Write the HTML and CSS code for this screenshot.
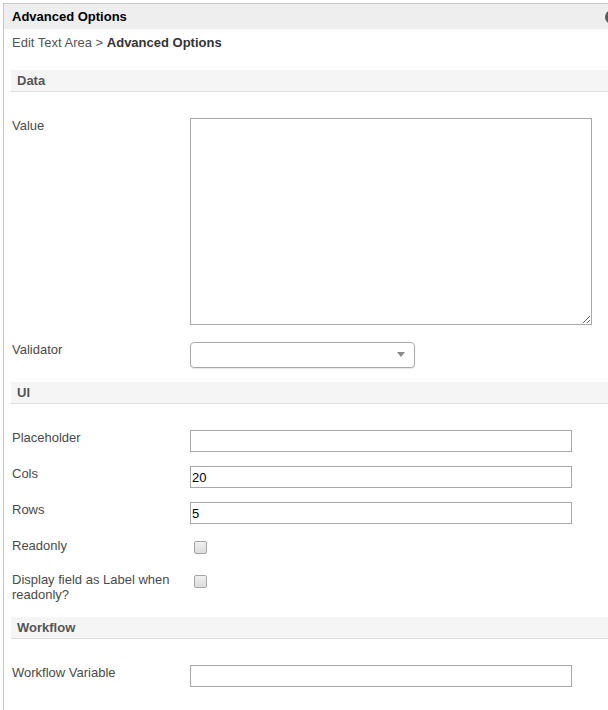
FILE: index.html
```html
<!DOCTYPE html>
<html lang="en">

<head>
    <meta charset="UTF-8">
    <title>Advanced Options</title>
    <link rel="stylesheet" href="styles.css">
</head>

<body>
    <div class="dialog">
        <div class="dialog-title">
            Advanced Options
            <span class="close"></span>
        </div>

        <div class="dialog-body">
            <div class="breadcrumb">Edit Text Area &gt; <strong>Advanced Options</strong></div>

            <div class="section">
                <h3 class="section-title">Data</h3>
                <div class="field field-tall">
                    <label for="value">Value</label>
                    <textarea id="value"></textarea>
                </div>
                <div class="field">
                    <label>Validator</label>
                    <div class="select"></div>
                </div>
            </div>

            <div class="section">
                <h3 class="section-title">UI</h3>
                <div class="field">
                    <label for="placeholder">Placeholder</label>
                    <input type="text" id="placeholder">
                </div>
                <div class="field">
                    <label for="cols">Cols</label>
                    <input type="text" id="cols" value="20">
                </div>
                <div class="field">
                    <label for="rows">Rows</label>
                    <input type="text" id="rows" value="5">
                </div>
                <div class="field">
                    <label for="readonly">Readonly</label>
                    <input type="checkbox" id="readonly">
                </div>
                <div class="field field-last">
                    <label for="readonlyLabel">Display field as Label when readonly?</label>
                    <input type="checkbox" id="readonlyLabel">
                </div>
            </div>

            <div class="section">
                <h3 class="section-title">Workflow</h3>
                <div class="field">
                    <label for="workflowVariable">Workflow Variable</label>
                    <input type="text" id="workflowVariable">
                </div>
            </div>
        </div>
    </div>
</body>

</html>
```

FILE: styles.css
```css
* {
    box-sizing: border-box;
}

body {
    margin: 0;
    padding: 3px 0 0 3px;
    height: 710px;
    overflow: hidden;
    font-family: "Liberation Sans", Arial, sans-serif;
    font-size: 13px;
    color: #4a4a4a;
    background: #fff;
}

.dialog {
    border-top: 1px solid #c6c6c6;
    border-left: 1px solid #c6c6c6;
    min-height: 707px;
}

.dialog-title {
    position: relative;
    overflow: hidden;
    height: 25px;
    line-height: 25px;
    padding-left: 8px;
    background-color: #eee;
    color: #000;
    font-weight: bold;
}

.close {
    position: absolute;
    top: 6px;
    right: -11px;
    width: 14px;
    height: 14px;
    border-radius: 50%;
    background-color: #5a5a5a;
}

.dialog-body {
    padding: 6px 0 0 7px;
}

.breadcrumb {
    line-height: 15px;
    padding-left: 1px;
    margin-bottom: 20px;
    color: #555;
}

.breadcrumb strong {
    color: #333;
}

.section-title {
    margin: 0 0 26px;
    height: 22px;
    line-height: 21px;
    padding-left: 6px;
    font-size: 13px;
    color: #555;
    background-color: #f5f5f5;
    border-bottom: 1px solid #ddd;
}

.field {
    display: grid;
    grid-template-columns: 179px 1fr;
    align-items: start;
    margin-bottom: 14px;
}

.field label {
    padding-left: 1px;
    line-height: 15px;
}

.field-tall {
    margin-bottom: 17px;
}

.field-last {
    margin-bottom: 15px;
}

textarea {
    display: block;
    margin: 0;
    width: 402px;
    height: 207px;
    border: 1px solid #a9a9a9;
    border-radius: 0;
    font-family: inherit;
    font-size: 13px;
}

input[type="text"] {
    display: block;
    margin: 0;
    width: 382px;
    height: 22px;
    padding: 0 1px;
    border: 1px solid #a9a9a9;
    border-radius: 0;
    font-family: inherit;
    font-size: 13px;
    color: #000;
}

input[type="checkbox"] {
    appearance: none;
    display: block;
    width: 13px;
    height: 13px;
    margin: 3px 0 4px 4px;
    border: 1px solid #a6a6a6;
    border-radius: 2px;
    background: linear-gradient(#f0f0f0, #dcdcdc);
}

.select {
    position: relative;
    width: 225px;
    height: 26px;
    border: 1px solid #aaa;
    border-radius: 4px;
    background-color: #fff;
    box-shadow: 0 1px 1px rgba(0, 0, 0, 0.1);
}

.select::after {
    content: "";
    position: absolute;
    top: 9px;
    right: 9px;
    border-left: 4px solid transparent;
    border-right: 4px solid transparent;
    border-top: 5px solid #888;
}
```
